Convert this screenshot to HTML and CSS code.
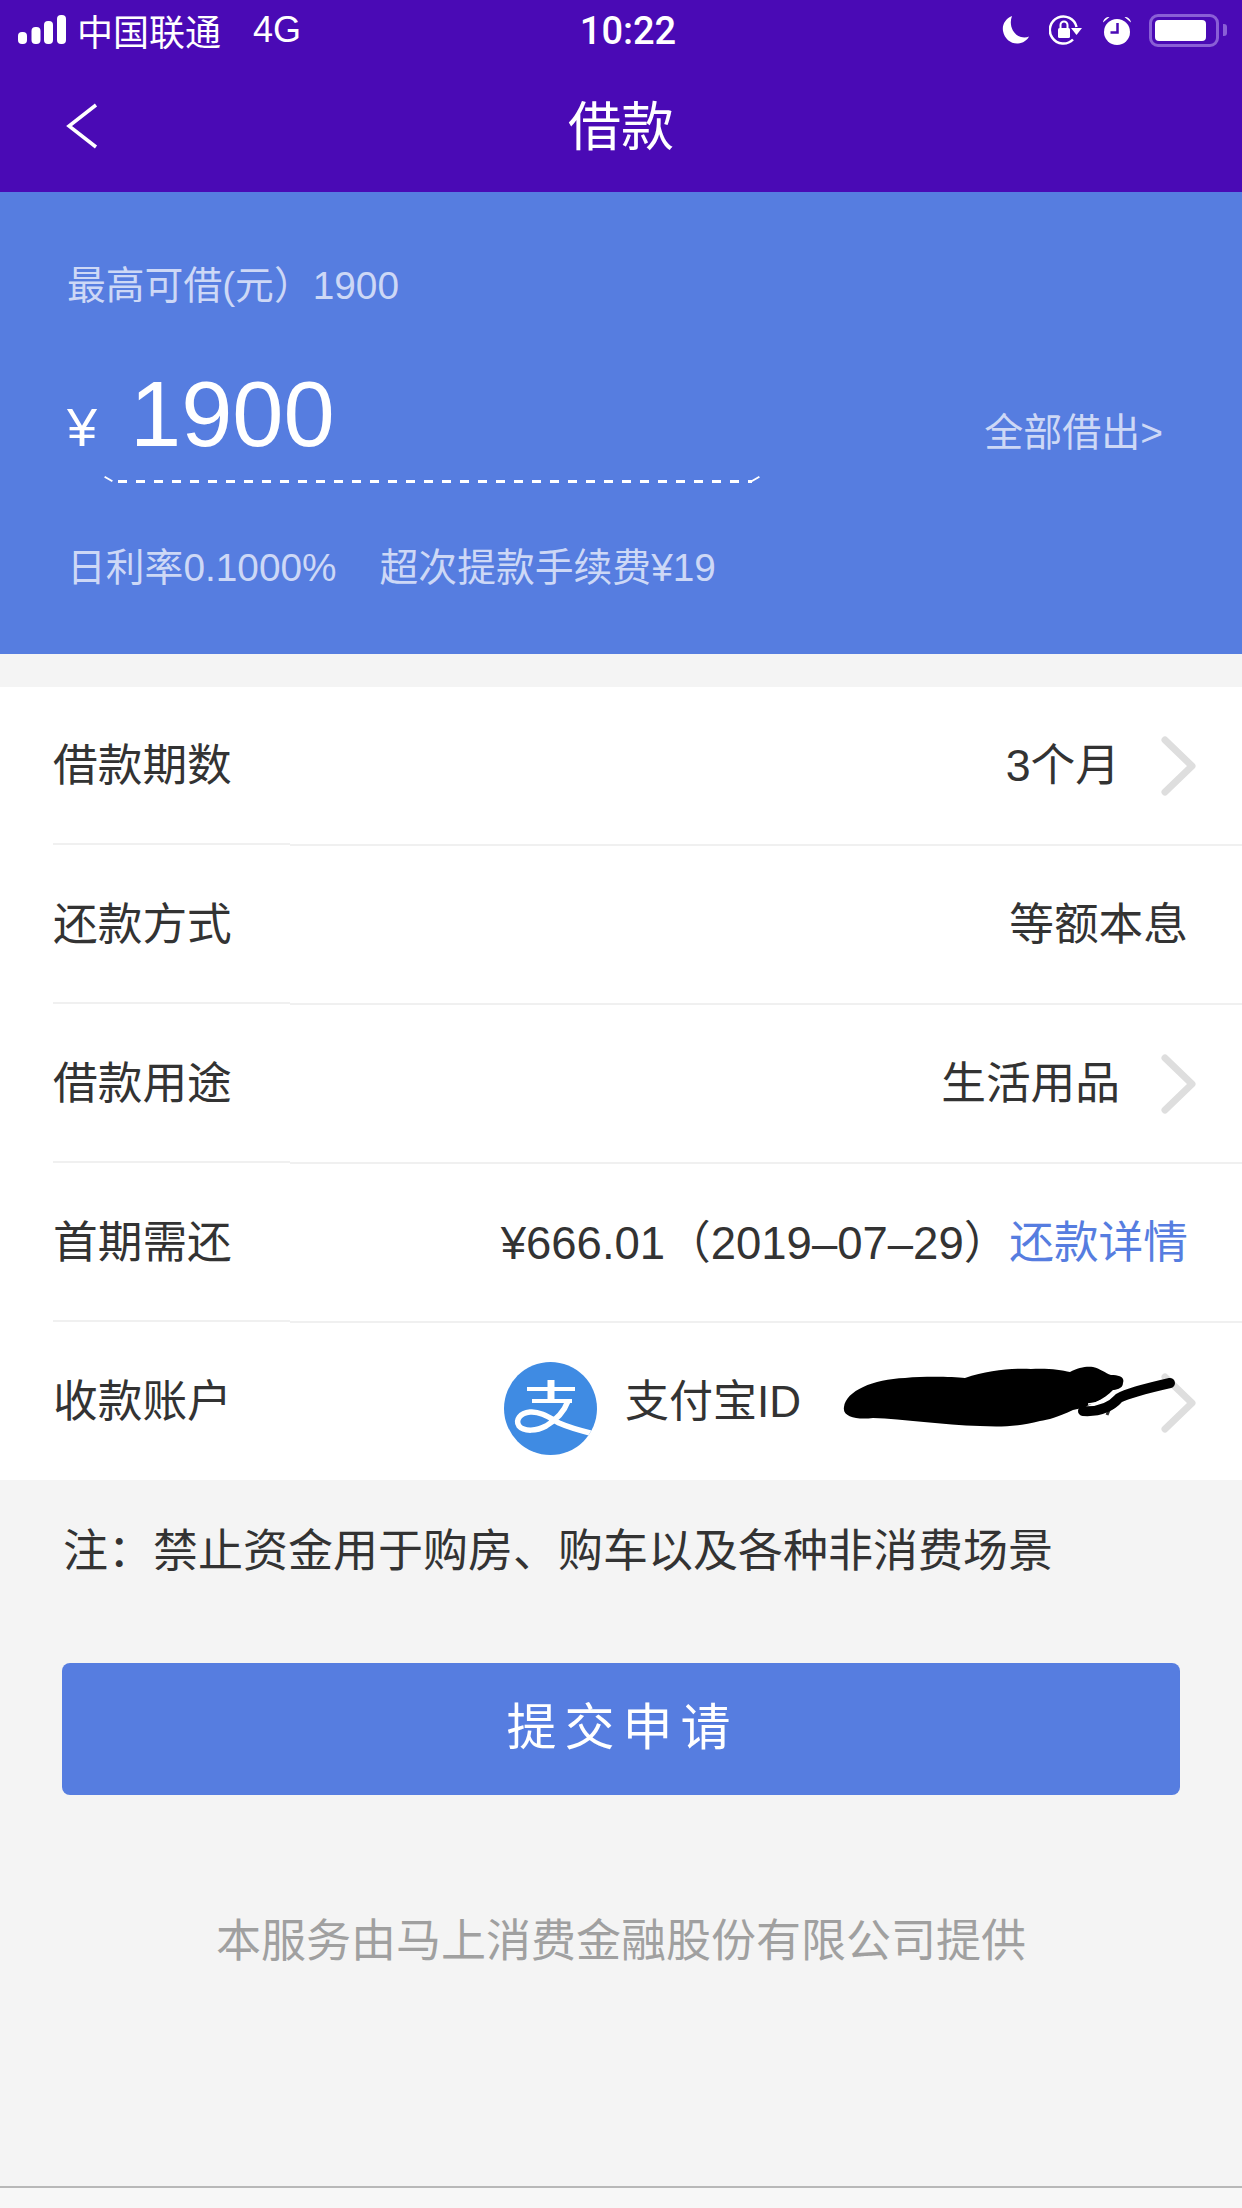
FILE: index.html
```html
<!DOCTYPE html>
<html lang="zh-CN">
<head>
    <meta charset="UTF-8">
    <meta name="viewport" content="width=device-width, initial-scale=1.0">
    <title>借款</title>
    <link rel="stylesheet" href="styles.css">
</head>
<body>

    <!-- 状态栏 -->
    <div class="status-bar">
        <div class="status-left">
            <svg class="signal" width="48" height="30" viewBox="0 0 48 30">
                <rect x="0" y="17" width="9" height="12" rx="4" fill="#fff"/>
                <rect x="13.500" y="12" width="9" height="17" rx="4" fill="#fff"/>
                <rect x="26" y="6" width="9" height="23" rx="4" fill="#fff"/>
                <rect x="39" y="0" width="9" height="29" rx="4" fill="#fff"/>
            </svg>
            <span class="carrier">中国联通</span>
            <span class="network">4G</span>
        </div>
        <div class="status-time">10:22</div>
        <div class="status-right">
            <svg width="28" height="28" viewBox="0 0 28 28">
                <path d="M10 0C3 3 0 9 1 15c1.500 8 8 13 15 12.500 5-.4 9-3 11-7-2 1-5 1.300-8 .6C11 19 6.500 9 10 0z" fill="#fff"/>
            </svg>
            <svg width="34" height="30" viewBox="0 0 34 30">
                <path d="M24 24.500A13.500 13.500 0 1 1 27.500 12" fill="none" stroke="#fff" stroke-width="2.500"/>
                <path d="M22 13h11l-5.500 7z" fill="#fff"/>
                <rect x="9" y="13" width="12" height="10" rx="1.500" fill="#fff"/>
                <path d="M11.500 13V10a3.500 3.500 0 0 1 7 0v3" fill="none" stroke="#fff" stroke-width="2"/>
            </svg>
            <svg width="30" height="29" viewBox="0 0 30 29">
                <circle cx="15" cy="16" r="13" fill="#fff"/>
                <path d="M1 6.500C1.500 3 4 1 7.500 1zM29 6.500C28.500 3 26 1 22.500 1z" fill="#fff"/>
                <path d="M15.500 7v9.500H8.500" fill="none" stroke="#4a0ab5" stroke-width="2.500"/>
            </svg>
            <div class="battery">
                <div class="battery-body"><div class="battery-fill"></div></div>
                <div class="battery-nub"></div>
            </div>
        </div>
    </div>

    <!-- 标题栏 -->
    <div class="nav-bar">
        <svg class="back-icon" width="32" height="46" viewBox="0 0 32 46">
            <path d="M30 2L3 23l27 21" fill="none" stroke="#fff" stroke-width="3.500"/>
        </svg>
        <h1 class="nav-title">借款</h1>
    </div>

    <!-- 额度区域 -->
    <div class="hero">
        <div class="hero-line">最高可借(元）1900</div>
        <div class="amount-row">
            <span class="amount-yen">¥</span>
            <div class="amount-box">1900</div>
            <a class="amount-all">全部借出&gt;</a>
        </div>
        <div class="hero-line hero-rates">
            <span>日利率0.1000%</span>
            <span>超次提款手续费¥19</span>
        </div>
    </div>

    <!-- 借款信息 -->
    <div class="info-list">
        <div class="row">
            <div class="row-label">借款期数</div>
            <div class="row-value has-arrow">
                <span>3个月</span>
                <svg class="arrow" width="38" height="62" viewBox="0 0 38 62"><path d="M7 5l27 26L7 57" fill="none" stroke="#dedede" stroke-width="7" stroke-linecap="round" stroke-linejoin="round"/></svg>
            </div>
        </div>
        <div class="row">
            <div class="row-label">还款方式</div>
            <div class="row-value">等额本息</div>
        </div>
        <div class="row">
            <div class="row-label">借款用途</div>
            <div class="row-value has-arrow">
                <span>生活用品</span>
                <svg class="arrow" width="38" height="62" viewBox="0 0 38 62"><path d="M7 5l27 26L7 57" fill="none" stroke="#dedede" stroke-width="7" stroke-linecap="round" stroke-linejoin="round"/></svg>
            </div>
        </div>
        <div class="row">
            <div class="row-label">首期需还</div>
            <div class="row-value">
                <span class="first-due">¥666.01（2019–07–29）</span><a class="link">还款详情</a>
            </div>
        </div>
        <div class="row row-account">
            <div class="row-label">收款账户</div>
            <div class="row-value account">
                <svg class="alipay" width="93" height="93" viewBox="0 0 93 93">
                    <defs><clipPath id="alipay-clip"><circle cx="46.500" cy="46.500" r="46.500"/></clipPath></defs>
                    <circle cx="46.500" cy="46.500" r="46.500" fill="#3f8be3"/>
                    <g clip-path="url(#alipay-clip)" fill="none" stroke="#fff">
                        <path d="M23 27h48M28 39h40" stroke-width="4"/>
                        <path d="M47 18v21" stroke-width="7"/>
                        <path d="M64 39C60 50 52 58 42 64 33 69 20 70 15 64 11 58 16 51 26 50 36 49 46 56 55 61 66 66 78 69 90 72" stroke-width="5.500"/>
                    </g>
                </svg>
                <span class="account-name">支付宝ID</span>
                <svg class="arrow arrow-account" width="38" height="62" viewBox="0 0 38 62"><path d="M7 5l27 26L7 57" fill="none" stroke="#dedede" stroke-width="7" stroke-linecap="round" stroke-linejoin="round"/></svg>
            </div>
            <!-- 涂抹遮挡 -->
            <svg class="scribble" width="340" height="66" viewBox="0 0 340 66">
                <path d="M244 33L239 50M269 38L264 50" fill="none" stroke="#333" stroke-width="3"/>
                <path d="M1 42C3 26 30 14 62 13C85 11 110 12 122 13C145 5 170 3 188 4C205 3 218 5 227 7C235 2 245 1 250 2C258 4 262 8 268 10C276 10 282 12 280 18C280 24 272 25 270 25C262 34 245 42 230 45C215 52 205 55 197 56C175 62 155 62 137 61C100 60 60 54 30 53C14 55-1 52 1 42Z" fill="#000"/>
                <path d="M327 18C305 23 285 28 276 33C268 42 255 47 240 46" fill="none" stroke="#000" stroke-width="10" stroke-linecap="round"/>
                <path d="M245 39C250 39 256 37 262 34" fill="none" stroke="#fff" stroke-width="1.500"/>
            </svg>
        </div>
    </div>

    <p class="note">注：禁止资金用于购房、购车以及各种非消费场景</p>

    <button class="submit-btn"><span class="submit-text">提交申请</span></button>

    <p class="provider">本服务由马上消费金融股份有限公司提供</p>

    <div class="bottom-bar"></div>

</body>
</html>
```

FILE: styles.css
```css
/* 基础样式 */
body {
    margin: 0;
    width: 1242px;
    height: 2208px;
    overflow: hidden;
    background-color: #f4f4f4;
    font-family: "Liberation Sans", "Noto Sans CJK SC", sans-serif;
    color: #333;
}

/* 状态栏 */
.status-bar {
    height: 60px;
    padding: 0 15px 0 18px;
    display: flex;
    align-items: center;
    justify-content: space-between;
    position: relative;
    background-color: #4a0ab5;
    color: #fff;
}

.status-left {
    display: flex;
    align-items: center;
    font-size: 36px;
}

.carrier {
    margin-left: 11px;
}

.network {
    margin-left: 32px;
}

.status-time {
    position: absolute;
    left: 0;
    right: 0;
    padding: 2px 0 0 14px;
    text-align: center;
    font-family: Roboto, sans-serif;
    font-weight: 500;
    font-size: 38px;
}

.status-right {
    display: flex;
    align-items: center;
    gap: 19px;
}

.battery {
    display: flex;
    align-items: center;
    gap: 4px;
    margin-left: -2px;
}

.battery-body {
    box-sizing: border-box;
    width: 70px;
    height: 33px;
    padding: 3px;
    border: 3px solid #8a5fd6;
    border-radius: 9px;
}

.battery-fill {
    width: 51px;
    height: 100%;
    background-color: #fff;
    border-radius: 4px;
}

.battery-nub {
    width: 4px;
    height: 12px;
    background-color: #8a5fd6;
    border-radius: 0 3px 3px 0;
}

/* 标题栏 */
.nav-bar {
    height: 132px;
    display: flex;
    align-items: center;
    justify-content: center;
    position: relative;
    background-color: #4a0ab5;
}

.back-icon {
    position: absolute;
    left: 66px;
    top: 43px;
}

.nav-title {
    margin: 0 0 7px;
    font-size: 53px;
    font-weight: normal;
    color: #fff;
}

/* 额度区域 */
.hero {
    height: 393px;
    padding: 69px 60px 0 67px;
    background-color: #567de0;
    color: #cdd8f6;
}

.hero-line {
    font-size: 38.800px;
    line-height: 50px;
}

.amount-row {
    display: flex;
    align-items: baseline;
    margin-top: 36px;
}

.amount-yen {
    width: 33px;
    font-size: 54px;
    color: #fff;
}

/* 虚线下划线 */
.amount-box {
    width: 633px;
    height: 108px;
    padding: 14px 0 14px 30px;
    position: relative;
    font-size: 92px;
    line-height: 106px;
    color: #fff;
    background: repeating-linear-gradient(90deg, #fff 0 9px, transparent 9px 18px) 18px 100% / 634px 3px no-repeat;
}

.amount-box::before,
.amount-box::after {
    content: "";
    position: absolute;
    bottom: 3px;
    width: 9px;
    height: 2px;
    background-color: #fff;
}

.amount-box::before {
    left: 4px;
    transform: rotate(30deg);
}

.amount-box::after {
    right: 3px;
    transform: rotate(-30deg);
}

.amount-all {
    margin-left: auto;
    padding-right: 19px;
    font-size: 39px;
}

.hero-rates {
    display: flex;
    gap: 43px;
    margin-top: 60px;
}

/* 借款信息 */
.info-list {
    margin-top: 33px;
    background-color: #fff;
}

.row {
    display: flex;
    height: 159px;
    position: relative;
}

.row-label {
    box-sizing: border-box;
    width: 237px;
    margin-left: 53px;
    margin-bottom: 1px;
    padding-bottom: 8px;
    display: flex;
    align-items: center;
    font-size: 44.700px;
    border-bottom: 2px solid #f0f0f0;
}

.row-value {
    flex: 1;
    display: flex;
    align-items: center;
    justify-content: flex-end;
    padding: 0 54px 8px 0;
    font-size: 44.700px;
    border-bottom: 2px solid #f0f0f0;
}

.has-arrow {
    padding-right: 46px;
}

.arrow {
    margin: 8px 0 0 38px;
}

.first-due {
    font-size: 45.500px;
}

.link {
    color: #567de0;
}

.row-account {
    height: 157px;
}

.row-account .row-label,
.row-account .row-value {
    border-bottom: none;
}

.row-account .row-label {
    padding-bottom: 8px;
}

.account {
    justify-content: flex-start;
    padding: 0 46px 0 214px;
}

.alipay {
    margin-top: 13px;
}

.account-name {
    margin: 0 0 8px 28px;
    font-size: 44px;
}

.arrow-account {
    margin: 2px 0 0 auto;
}

.scribble {
    position: absolute;
    left: 843px;
    top: 42px;
}

/* 底部 */
.note {
    margin: 0;
    padding: 40px 0 0 63px;
    font-size: 45px;
    line-height: 64px;
}

.submit-btn {
    display: block;
    width: 1118px;
    height: 132px;
    margin: 79px 0 0 62px;
    padding: 0 0 12px 3px;
    border: none;
    border-radius: 8px;
    background-color: #567de0;
    color: #fff;
    font-family: inherit;
    font-size: 50px;
}

.submit-text {
    letter-spacing: 8px;
}

.provider {
    margin: 114px 0 0;
    text-align: center;
    font-size: 45px;
    line-height: 66px;
    color: #a0a0a0;
}

.bottom-bar {
    margin-top: 211px;
    height: 30px;
    border-top: 2px solid #b8b8b8;
    background-color: #f7f7f7;
}
```
